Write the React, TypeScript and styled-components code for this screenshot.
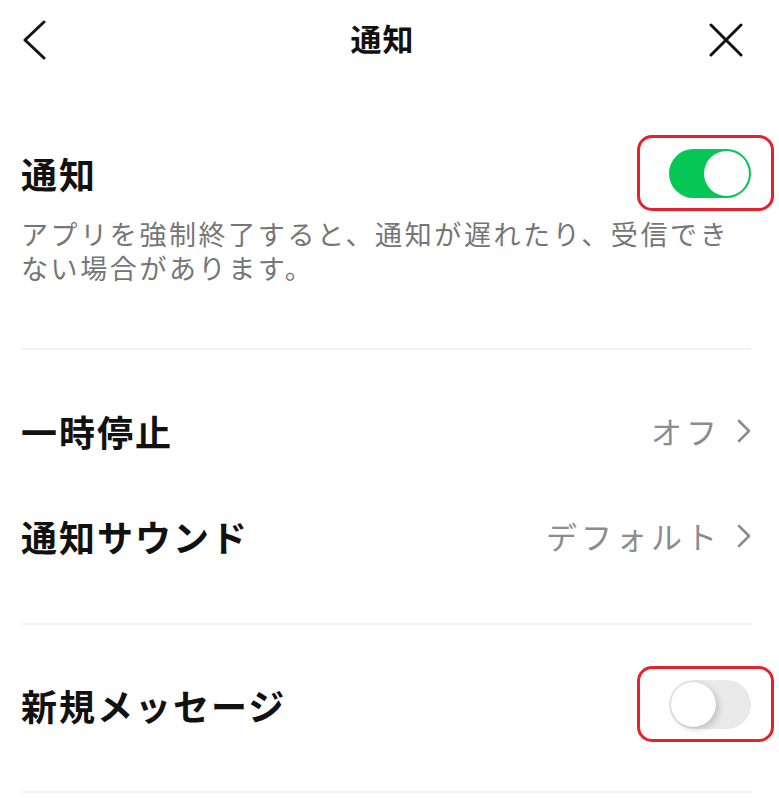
import React from 'react';
import styled, { createGlobalStyle } from 'styled-components';

const GlobalStyle = createGlobalStyle`
  html, body {
    margin: 0;
    padding: 0;
    background: #ffffff;
  }
  body {
    font-family: "Noto Sans CJK JP", "Noto Sans", sans-serif;
    color: #111111;
  }
`;

const Page = styled.div`
  width: 779px;
  min-height: 800px;
  background: #ffffff;
`;

const Header = styled.header`
  height: 80px;
  display: grid;
  grid-template-columns: 1fr auto 1fr;
  align-items: center;
  padding: 0 36px 0 22px;
`;

const HeaderTitle = styled.h1`
  margin: -6px 0 0;
  font-size: 31px;
  font-weight: 700;
  letter-spacing: 1px;
  color: #111111;
`;

const IconButton = styled.button<{ $align: 'start' | 'end' }>`
  justify-self: ${(p) => p.$align};
  background: none;
  border: 0;
  padding: 0;
  display: flex;
  cursor: pointer;
`;

const Section = styled.section<{ $pad: string }>`
  padding: ${(p) => p.$pad};
  margin: 0 28px 0 21px;
  border-bottom: 2px solid #f2f2f2;
`;

const Row = styled.div<{ $h: number }>`
  height: ${(p) => p.$h}px;
  display: flex;
  align-items: center;
  justify-content: space-between;
`;

const Label = styled.span`
  font-size: 36px;
  font-weight: 700;
  letter-spacing: 2px;
  color: #111111;
`;

const Description = styled.p`
  margin: 14px 0 0;
  font-size: 27px;
  line-height: 34px;
  letter-spacing: 2.6px;
  color: #767676;
`;

const Value = styled.span`
  display: flex;
  align-items: center;
  gap: 16px;
  font-size: 31px;
  letter-spacing: 4px;
  color: #8c8c8c;
`;

const ToggleWrap = styled.div`
  position: relative;
  display: flex;
`;

const Track = styled.div<{ $on: boolean }>`
  width: 82px;
  height: 49px;
  border-radius: 25px;
  background: ${(p) => (p.$on ? '#06c755' : '#e9e9ea')};
  display: flex;
  align-items: center;
  justify-content: ${(p) => (p.$on ? 'flex-end' : 'flex-start')};
  padding: 0 2px;
  box-sizing: border-box;
`;

const Knob = styled.div<{ $on: boolean }>`
  width: 45px;
  height: 45px;
  border-radius: 50%;
  background: #ffffff;
  box-shadow: ${(p) =>
    p.$on ? 'none' : '0 0 0 1px rgba(0,0,0,0.05), 3px 3px 6px rgba(0,0,0,0.15)'};
`;

const Highlight = styled.div`
  position: absolute;
  left: -32px;
  right: -23px;
  top: -14px;
  bottom: -13px;
  border: 3px solid #e3222b;
  border-radius: 15px;
  pointer-events: none;
`;

const Toggle = ({ on }: { on: boolean }) => (
  <ToggleWrap>
    <Track $on={on}>
      <Knob $on={on} />
    </Track>
    <Highlight />
  </ToggleWrap>
);

const BackIcon = () => (
  <svg width="24" height="40" viewBox="0 0 24 40">
    <path d="M22 2 L3 20 L22 38" fill="none" stroke="#111" strokeWidth="3" strokeLinecap="round" strokeLinejoin="round" />
  </svg>
);

const CloseIcon = () => (
  <svg width="34" height="34" viewBox="0 0 34 34">
    <path d="M2 2 L32 32 M32 2 L2 32" fill="none" stroke="#111" strokeWidth="3" strokeLinecap="round" />
  </svg>
);

const Chevron = () => (
  <svg width="14" height="24" viewBox="0 0 14 24">
    <path d="M2 2 L12 12 L2 22" fill="none" stroke="#8c8c8c" strokeWidth="2.6" strokeLinecap="round" strokeLinejoin="round" />
  </svg>
);

export default function App() {
  return (
    <Page>
      <GlobalStyle />
      <Header>
        <IconButton $align="start">
          <BackIcon />
        </IconButton>
        <HeaderTitle>通知</HeaderTitle>
        <IconButton $align="end">
          <CloseIcon />
        </IconButton>
      </Header>

      <Section $pad="63px 0 63px">
        <Row $h={60}>
          <Label>通知</Label>
          <Toggle on />
        </Row>
        <Description>
          アプリを強制終了すると、通知が遅れたり、受信できない場合があります。
        </Description>
      </Section>

      <Section $pad="28px 0 35px">
        <Row $h={105}>
          <Label>一時停止</Label>
          <Value>
            オフ
            <Chevron />
          </Value>
        </Row>
        <Row $h={105}>
          <Label>通知サウンド</Label>
          <Value>
            デフォルト
            <Chevron />
          </Value>
        </Row>
      </Section>

      <Section $pad="27px 0 34px">
        <Row $h={105}>
          <Label>新規メッセージ</Label>
          <Toggle on={false} />
        </Row>
      </Section>
    </Page>
  );
}
